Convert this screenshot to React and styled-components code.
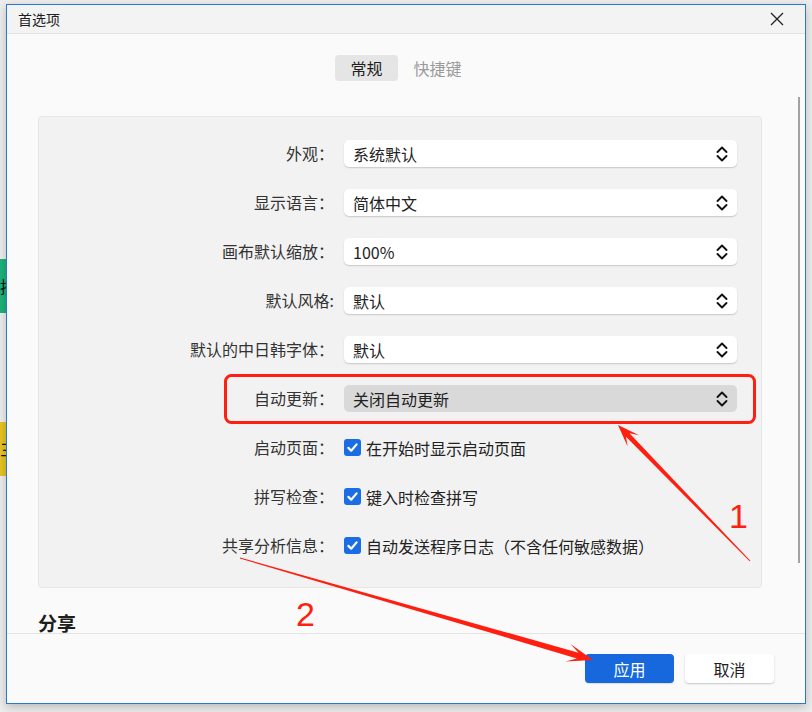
import React from "react";
import styled, { createGlobalStyle } from "styled-components";

const Global = createGlobalStyle`
  html, body { margin: 0; padding: 0; }
  body {
    background: #ededed;
    font-family: "Noto Sans CJK SC", "Noto Sans", sans-serif;
    width: 812px;
    height: 712px;
    overflow: hidden;
  }
  * { box-sizing: border-box; }
`;

const Desktop = styled.div`
  position: relative;
  display: flex;
  width: 812px;
  height: 712px;
  padding-top: 4px;
`;

const BackColumn = styled.div`
  width: 6px;
  display: flex;
  flex-direction: column;
`;

const BackStrip = styled.div`
  height: 54px;
  margin-top: ${(p) => p.$top}px;
  background: ${(p) => p.$color};
  overflow: hidden;
  display: flex;
  justify-content: flex-end;
  align-items: center;
  font-size: 16px;
  color: #111;
  white-space: nowrap;
  direction: rtl;
`;

const Window = styled.div`
  width: 800px;
  height: 700px;
  border: 1px solid #2a78d2;
  background: #fafafa;
  display: flex;
  flex-direction: column;
  box-shadow: 0 3px 9px rgba(0, 0, 0, 0.22);
`;

const TitleBar = styled.div`
  height: 29px;
  flex: none;
  background: #f3f3f3;
  border-bottom: 1px solid #e2e2e2;
  display: flex;
  align-items: center;
  justify-content: space-between;
  padding-left: 11px;
  padding-right: 8px;
`;

const Title = styled.div`
  font-size: 14px;
  color: #1e1e1e;
  line-height: 1;
`;

const CloseButton = styled.div`
  width: 40px;
  height: 28px;
  display: flex;
  align-items: center;
  justify-content: center;
`;

const Body = styled.div`
  position: relative;
  height: 599px;
  flex: none;
  overflow: hidden;
  display: flex;
  flex-direction: column;
`;

const Tabs = styled.div`
  display: flex;
  justify-content: center;
  gap: 1px;
  padding-top: 21px;
`;

const Tab = styled.div`
  height: 26px;
  padding: 0 15px;
  border-radius: 4px;
  font-size: 16px;
  line-height: 26px;
  color: ${(p) => (p.$active ? "#1e1e1e" : "#9a9a9a")};
  background: ${(p) => (p.$active ? "#e5e5e5" : "transparent")};
`;

const Panel = styled.div`
  margin: 35px 43px 0 31px;
  background: #f2f2f2;
  border: 1px solid #e6e6e6;
  border-radius: 4px;
  padding: 23px 24px 28px 0;
  display: grid;
  grid-template-columns: 295px 1fr;
  column-gap: 10px;
  row-gap: 22px;
  grid-auto-rows: 27px;
`;

const Label = styled.div`
  text-align: right;
  font-size: 16px;
  line-height: 27px;
  color: #333;
  white-space: nowrap;
`;

const Select = styled.div`
  height: 27px;
  border-radius: 5px;
  background: ${(p) => (p.$hover ? "#d9d9d9" : "#ffffff")};
  box-shadow: ${(p) => (p.$hover ? "none" : "0 1px 1.5px rgba(0,0,0,0.18)")};
  display: flex;
  align-items: center;
  justify-content: space-between;
  padding: 0 9px 0 9px;
  font-size: 16px;
  color: #222;
`;

const CheckRow = styled.div`
  display: flex;
  align-items: center;
  gap: 5px;
  font-size: 16px;
  color: #222;
`;

const CheckBox = styled.div`
  width: 17px;
  height: 17px;
  border-radius: 3px;
  background: #1a6de3;
  display: flex;
  align-items: center;
  justify-content: center;
`;

const SectionHeading = styled.div`
  margin: 22px 0 0 31px;
  font-size: 19px;
  line-height: 26px;
  font-weight: 700;
  color: #1e1e1e;
`;

const ScrollThumb = styled.div`
  position: absolute;
  right: 5px;
  top: 63px;
  width: 2px;
  height: 466px;
  background: #a3a3a3;
`;

const Footer = styled.div`
  flex: 1;
  border-top: 1px solid #e4e4e4;
  display: flex;
  justify-content: flex-end;
  align-items: center;
  gap: 11px;
  padding-right: 31px;
`;

const Button = styled.div`
  width: 89px;
  height: 29px;
  border-radius: 4px;
  display: flex;
  align-items: center;
  justify-content: center;
  font-size: 16px;
  color: ${(p) => (p.$primary ? "#ffffff" : "#1e1e1e")};
  background: ${(p) => (p.$primary ? "#1668dc" : "#ffffff")};
  box-shadow: ${(p) =>
    p.$primary ? "0 1px 1px rgba(0,0,0,0.12)" : "0 1px 2px rgba(0,0,0,0.2)"};
`;

const Overlay = styled.svg`
  position: absolute;
  left: 0;
  top: 0;
  pointer-events: none;
`;

const Chevrons = () => (
  <svg width="12" height="18" viewBox="0 0 12 18" fill="none">
    <polyline points="1.5,7 6,2.5 10.5,7" stroke="#111" strokeWidth="1.9" strokeLinecap="round" strokeLinejoin="round" />
    <polyline points="1.5,11 6,15.5 10.5,11" stroke="#111" strokeWidth="1.9" strokeLinecap="round" strokeLinejoin="round" />
  </svg>
);

const Check = () => (
  <svg width="17" height="17" viewBox="0 0 17 17" fill="none">
    <polyline points="4.4,8.9 7.2,11.7 12.6,5.4" stroke="#fff" strokeWidth="2.2" strokeLinecap="round" strokeLinejoin="round" />
  </svg>
);

const CloseIcon = () => (
  <svg width="14" height="14" viewBox="0 0 14 14">
    <path d="M1 1 L13 13 M13 1 L1 13" stroke="#222" strokeWidth="1.3" />
  </svg>
);

function arrow(t, p, o) {
  const dx = p[0] - t[0];
  const dy = p[1] - t[1];
  const L = Math.hypot(dx, dy);
  const ux = dx / L;
  const uy = dy / L;
  const nx = -uy;
  const ny = ux;
  const at = (d, w) => [p[0] - ux * d + nx * w, p[1] - uy * d + ny * w];
  const pts = [
    [t[0] + (nx * o.tail) / 2, t[1] + (ny * o.tail) / 2],
    at(o.neck, o.shaft / 2),
    at(o.head, o.wing),
    p,
    at(o.head, -o.wing),
    at(o.neck, -o.shaft / 2),
    [t[0] - (nx * o.tail) / 2, t[1] - (ny * o.tail) / 2],
  ];
  return pts.map((q) => q.map((v) => v.toFixed(1)).join(",")).join(" ");
}

const selects = [
  ["外观：", "系统默认"],
  ["显示语言：", "简体中文"],
  ["画布默认缩放：", "100%"],
  ["默认风格:", "默认"],
  ["默认的中日韩字体：", "默认"],
  ["自动更新：", "关闭自动更新", true],
];

const checks = [
  ["启动页面：", "在开始时显示启动页面"],
  ["拼写检查：", "键入时检查拼写"],
  ["共享分析信息：", "自动发送程序日志（不含任何敏感数据）"],
];

export default function App() {
  const red = "#ff1f10";
  return (
    <>
      <Global />
      <Desktop>
        <BackColumn>
          <BackStrip $top={255} $color="#1cb27a">按钮</BackStrip>
          <BackStrip $top={109} $color="#e6c423">三</BackStrip>
        </BackColumn>
        <Window>
          <TitleBar>
            <Title>首选项</Title>
            <CloseButton>
              <CloseIcon />
            </CloseButton>
          </TitleBar>
          <Body>
            <Tabs>
              <Tab $active>常规</Tab>
              <Tab>快捷键</Tab>
            </Tabs>
            <Panel>
              {selects.map(([label, value, hover]) => (
                <React.Fragment key={label}>
                  <Label>{label}</Label>
                  <Select $hover={hover}>
                    <span>{value}</span>
                    <Chevrons />
                  </Select>
                </React.Fragment>
              ))}
              {checks.map(([label, text]) => (
                <React.Fragment key={label}>
                  <Label>{label}</Label>
                  <CheckRow>
                    <CheckBox>
                      <Check />
                    </CheckBox>
                    <span>{text}</span>
                  </CheckRow>
                </React.Fragment>
              ))}
            </Panel>
            <SectionHeading>分享</SectionHeading>
            <ScrollThumb />
          </Body>
          <Footer>
            <Button $primary>应用</Button>
            <Button>取消</Button>
          </Footer>
        </Window>
        <Overlay width="812" height="712" viewBox="0 0 812 712">
          <rect x="225.5" y="375.5" width="529" height="47" rx="6" fill="none" stroke={red} strokeWidth="3" />
          <polygon
            fill={red}
            points={arrow([750, 561], [618, 425], { tail: 1, shaft: 5, neck: 14, head: 22, wing: 8 })}
          />
          <polygon
            fill={red}
            points={arrow([240, 558], [593, 660], { tail: 1, shaft: 6, neck: 16, head: 26, wing: 9 })}
          />
          <text x="729" y="528" fill={red} fontSize="34" fontFamily="Liberation Sans, Arial, sans-serif">1</text>
          <text x="296" y="626" fill={red} fontSize="34" fontFamily="Liberation Sans, Arial, sans-serif">2</text>
        </Overlay>
      </Desktop>
    </>
  );
}
